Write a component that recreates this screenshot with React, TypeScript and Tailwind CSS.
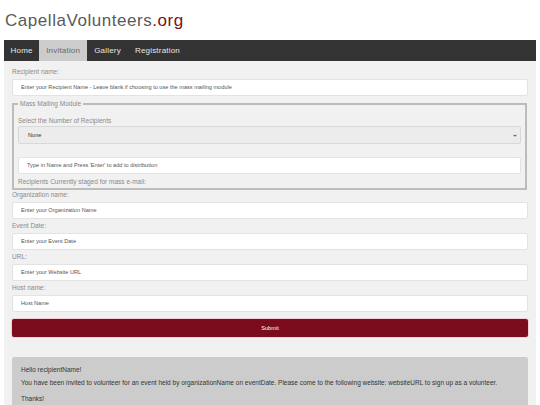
import React from "react";

const Label = ({ children, className = "" }: { children: React.ReactNode; className?: string }) => (
  <div className={`text-[6.5px] leading-[10px] text-[#8a8a8a] ${className}`}>{children}</div>
);

const Input = ({ placeholder, className = "" }: { placeholder: string; className?: string }) => (
  <div
    className={`h-[17px] bg-white border border-[#e3e3e3] rounded-[2px] flex items-center pl-[8px] text-[5.6px] text-[#555] ${className}`}
  >
    {placeholder}
  </div>
);

export default function App() {
  return (
    <div className="w-[540px] h-[405px] overflow-hidden bg-white font-['Liberation_Sans',Arial,sans-serif]">
      <div className="h-[40px] pl-[5px] pt-[12px]">
        <div className="text-[17px] leading-[17px] tracking-[0.55px] text-[#5a5a5a]">
          CapellaVolunteers<span className="text-[#7b1020]">.org</span>
        </div>
      </div>
      <div className="mx-[4px]">
        <div className="h-[21px] bg-[#333] flex text-[8px] tracking-[0.2px]">
          <div className="px-[6.5px] flex items-center text-[#e6e6e6]">Home</div>
          <div className="px-[7px] flex items-center bg-[#cccccc] text-[#6a6a6a]">Invitation</div>
          <div className="px-[7px] flex items-center text-[#e6e6e6]">Gallery</div>
          <div className="px-[7px] flex items-center text-[#e6e6e6]">Registration</div>
        </div>
        <div className="bg-[#f1f1f1] px-[8px] pt-[6px] pb-[20px]">
          <Label>Recipient name:</Label>
          <Input
            className="mt-[2px]"
            placeholder="Enter your Recipient Name - Leave blank if choosing to use the mass mailing module"
          />
          <fieldset className="mt-[3px] border-2 border-[#bcbcbc] pl-[4px] pr-[4px] pb-[1px] mr-[1px]">
            <legend className="px-[2px] text-[6.5px] leading-[10px] text-[#8a8a8a]">Mass Mailing Module</legend>
            <Label className="mt-[7px]">Select the Number of Recipients</Label>
            <div className="h-[18px] bg-[#ececec] border border-[#d8d8d8] rounded-[2px] flex items-center justify-between pl-[9px] pr-[3px] text-[5.6px] text-[#333]">
              <span>None</span>
              <svg width="4" height="3" viewBox="0 0 10 8">
                <path d="M1 2 L5 6 L9 2" fill="none" stroke="#333" strokeWidth="2.6" />
              </svg>
            </div>
            <Input
              className="mt-[13px]"
              placeholder="Type in Name and Press 'Enter' to add to distribution"
            />
            <Label className="mt-[3px]">Recipients Currently staged for mass e-mail:</Label>
          </fieldset>
          <Label>Organization name:</Label>
          <Input className="mt-[2px]" placeholder="Enter your Organization Name" />
          <Label className="mt-[2px]">Event Date:</Label>
          <Input className="mt-[2px]" placeholder="Enter your Event Date" />
          <Label className="mt-[2px]">URL:</Label>
          <Input className="mt-[2px]" placeholder="Enter your Website URL" />
          <Label className="mt-[2px]">Host name:</Label>
          <Input className="mt-[2px]" placeholder="Host Name" />
          <div className="mt-[7px] h-[18px] bg-[#7a0c1d] rounded-[2px] shadow-[0_0_0_1px_#f3d0d6] flex items-center justify-center text-[5.6px] text-white">
            Submit
          </div>
          <div className="mt-[20px] bg-[#cccccc] rounded-[2px] px-[9px] pt-[8px] pb-[10px] text-[6.5px] leading-[10px] text-[#333]">
            <p>Hello recipientName!</p>
            <p className="mt-[3px]">
              You have been invited to volunteer for an event held by organizationName on eventDate. Please come to the
              following website: websiteURL to sign up as a volunteer.
            </p>
            <p className="mt-[6px]">Thanks!</p>
          </div>
        </div>
      </div>
    </div>
  );
}
